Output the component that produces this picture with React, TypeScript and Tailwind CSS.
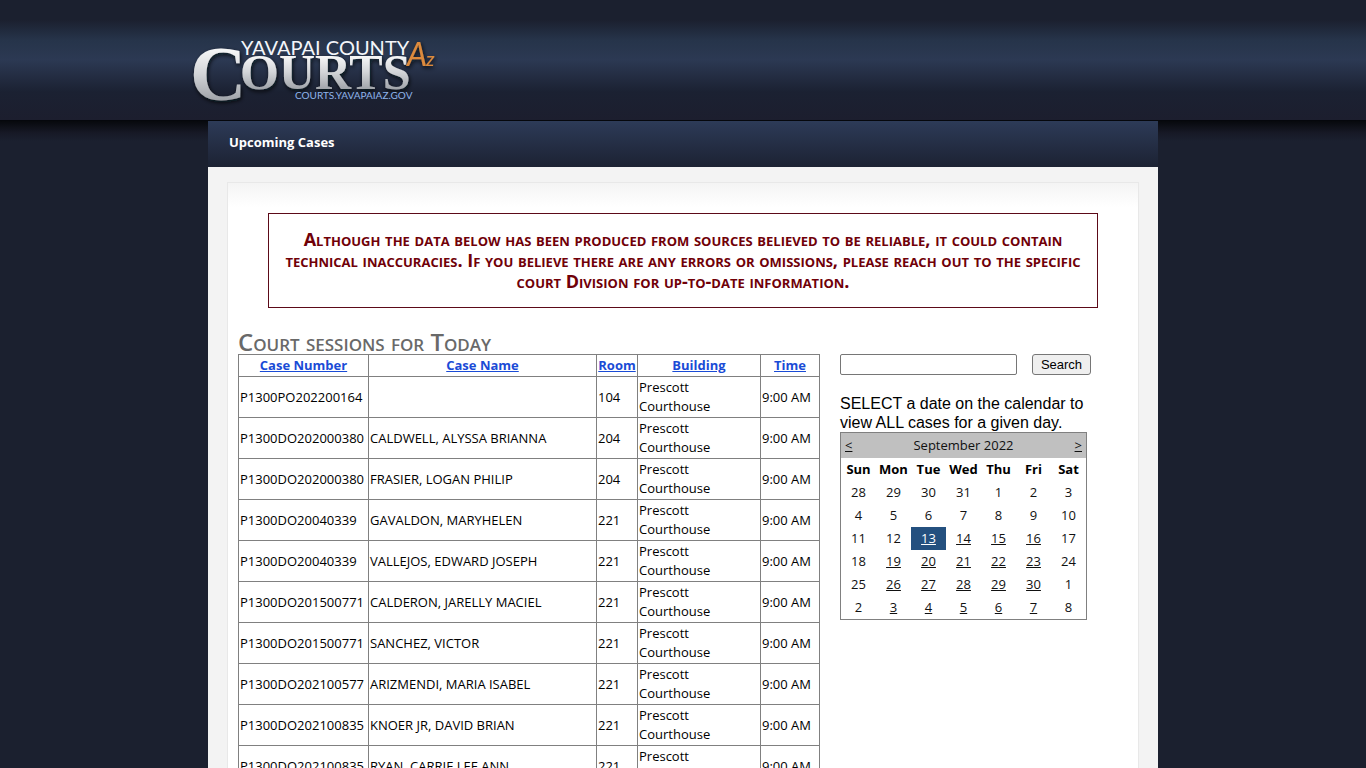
const columns = [
  { label: 'Case Number', width: 'w-[130px]' },
  { label: 'Case Name', width: 'w-[228px]' },
  { label: 'Room', width: 'w-[41px]' },
  { label: 'Building', width: 'w-[123px]' },
  { label: 'Time', width: 'w-[59px]' },
];

const cases = [
  ['P1300PO202200164', '', '104'],
  ['P1300DO202000380', 'CALDWELL, ALYSSA BRIANNA', '204'],
  ['P1300DO202000380', 'FRASIER, LOGAN PHILIP', '204'],
  ['P1300DO20040339', 'GAVALDON, MARYHELEN', '221'],
  ['P1300DO20040339', 'VALLEJOS, EDWARD JOSEPH', '221'],
  ['P1300DO201500771', 'CALDERON, JARELLY MACIEL', '221'],
  ['P1300DO201500771', 'SANCHEZ, VICTOR', '221'],
  ['P1300DO202100577', 'ARIZMENDI, MARIA ISABEL', '221'],
  ['P1300DO202100835', 'KNOER JR, DAVID BRIAN', '221'],
  ['P1300DO202100835', 'RYAN, CARRIE LEE ANN', '221'],
];

const dayNames = ['Sun', 'Mon', 'Tue', 'Wed', 'Thu', 'Fri', 'Sat'];

const weeks = [
  [28, 29, 30, 31, 1, 2, 3],
  [4, 5, 6, 7, 8, 9, 10],
  [11, 12, 13, 14, 15, 16, 17],
  [18, 19, 20, 21, 22, 23, 24],
  [25, 26, 27, 28, 29, 30, 1],
  [2, 3, 4, 5, 6, 7, 8],
];

// Weekdays from the 13th onward can be picked.
function isOpen(week: number, day: number) {
  if (day === 0 || day === 6) return false;
  return week > 2 || (week === 2 && day >= 2);
}

function Logo() {
  return (
    <svg width="250" height="76" viewBox="0 0 250 76" role="img" aria-label="Yavapai County Courts" className="-ml-2 overflow-visible">
      <defs>
        <linearGradient id="silver" x1="0" y1="0" x2="0" y2="1">
          <stop offset="0.15" stopColor="#ffffff" />
          <stop offset="0.5" stopColor="#d3d5d8" />
          <stop offset="0.85" stopColor="#999da3" />
        </linearGradient>
        <filter id="shade" x="-10%" y="-10%" width="120%" height="130%">
          <feDropShadow dx="1" dy="2" stdDeviation="2" floodColor="#05070d" floodOpacity="0.9" />
        </filter>
      </defs>
      <g filter="url(#shade)" fontFamily="Liberation Serif, serif" fontWeight="700" fill="url(#silver)">
        <text x="-10" y="64" fontSize="78">C</text>
      </g>
      <g filter="url(#shade)" fontFamily="Liberation Serif, serif" fontWeight="700" fill="url(#silver)">
        <text x="40" y="53" fontSize="50">OURTS</text>
      </g>
      <text x="41" y="19" fontFamily="Lato, sans-serif" fontSize="20" fill="#f4f6fa">YAVAPAI COUNTY</text>
      <text x="95" y="63" fontFamily="Lato, sans-serif" fontSize="10" fill="#8fb4ea">COURTS.YAVAPAIAZ.GOV</text>
      <g filter="url(#shade)" fontFamily="Lato, sans-serif" fontStyle="italic" fill="#dc8a3c">
        <text x="207" y="30" fontSize="32">A</text>
        <text x="226" y="30" fontSize="20">z</text>
      </g>
    </svg>
  );
}

function CaseTable() {
  return (
    <table className="w-[582px] table-fixed border-collapse text-[13px] leading-[19px] text-black">
      <thead>
        <tr>
          {columns.map((c) => (
            <th key={c.label} className={`${c.width} border border-[#808080] p-px text-center font-bold`}>
              <a href="#" className="text-[#1a4bd6] underline">{c.label}</a>
            </th>
          ))}
        </tr>
      </thead>
      <tbody>
        {cases.map(([number, name, room], i) => (
          <tr key={i}>
            <td className="border border-[#808080] p-px">{number}</td>
            <td className="border border-[#808080] p-px">{name}</td>
            <td className="border border-[#808080] p-px">{room}</td>
            <td className="border border-[#808080] p-px pr-8">Prescott Courthouse</td>
            <td className="whitespace-nowrap border border-[#808080] p-px">9:00 AM</td>
          </tr>
        ))}
      </tbody>
    </table>
  );
}

function Calendar() {
  return (
    <div className="w-[247px] border border-[#808080] text-[13px] leading-[19px] text-[#111]">
      <div className="flex items-center justify-between bg-[#c0c0c0] px-1 py-[3px]">
        <a href="#" aria-label="Previous month" className="underline">&lt;</a>
        <span>September 2022</span>
        <a href="#" aria-label="Next month" className="underline">&gt;</a>
      </div>
      <table className="w-full table-fixed border-collapse text-center">
        <thead>
          <tr>
            {dayNames.map((d) => (
              <th key={d} className="py-[2px] text-center font-bold text-black">{d}</th>
            ))}
          </tr>
        </thead>
        <tbody>
          {weeks.map((week, w) => (
            <tr key={w}>
              {week.map((n, d) => (
                <td key={d} className={w === 2 && d === 2 ? 'bg-[#24507f] py-[2px] text-white' : 'py-[2px]'}>
                  {isOpen(w, d) ? <a href="#" className="underline">{n}</a> : n}
                </td>
              ))}
            </tr>
          ))}
        </tbody>
      </table>
    </div>
  );
}

export default function App() {
  return (
    <div className="min-h-screen bg-[#1b202f] font-['Open_Sans','Noto_Sans',sans-serif]">
      <header className="h-[120px] bg-[linear-gradient(to_bottom,#1b202f_0px,#1b202f_20px,#26344a_40px,#2c3953_60px,#1b2132_92px,#1c1e2e_120px)]">
        <div className="mx-auto max-w-[950px] pt-9">
          <Logo />
        </div>
      </header>
      <div className="border-t border-[#05070c] bg-[linear-gradient(to_bottom,#07090d_0px,#171926_12px,#1b202f_20px)]">
        <div className="mx-auto max-w-[950px] bg-[#f3f3f3]">
          <nav className="flex h-[46px] items-center bg-linear-to-b from-[#2d3b58] to-[#1c2233] px-[21px]">
            <a href="#" className="pb-0.5 text-[13px] font-bold text-white">Upcoming Cases</a>
          </nav>
          <div className="px-[19px] pt-[15px]">
            <main className="border border-[#e8e8e8] bg-[linear-gradient(to_bottom,#f4f4f4_0px,#ffffff_24px)] px-[10px] pt-[30px] pb-5">
              <p className="mx-[30px] border border-[#5c0a18] px-4 py-[15px] text-center text-[18px] leading-[21px] font-bold text-[#700008] [font-variant:small-caps]">
                Although the data below has been produced from sources believed to be reliable, it could contain
                technical inaccuracies. If you believe there are any errors or omissions, please reach out to the specific
                court Division for up-to-date information.
              </p>
              <div className="mt-[22px] flex items-start gap-5">
                <section>
                  <h1 className="text-[24px] leading-6 font-semibold text-[#696969] [font-variant:small-caps]">Court sessions for Today</h1>
                  <CaseTable />
                </section>
                <aside className="w-[251px] pt-6 font-['Liberation_Sans',Arial,sans-serif]">
                  <form className="flex justify-between" onSubmit={(e) => e.preventDefault()}>
                    <input type="text" aria-label="Search cases" className="h-[21px] w-[177px] rounded-[2px] border border-[#767676] bg-white px-1 text-[13px]" />
                    <button type="submit" className="h-[21px] w-[59px] rounded-[3px] border border-[#767676] bg-[#efefef] text-[13px] leading-[19px] text-black">Search</button>
                  </form>
                  <p className="mt-[19px] text-[16px] leading-[19px] text-black">SELECT a date on the calendar to view ALL cases for a given day.</p>
                  <div className="font-['Open_Sans','Noto_Sans',sans-serif]">
                    <Calendar />
                  </div>
                </aside>
              </div>
            </main>
          </div>
        </div>
      </div>
    </div>
  );
}
